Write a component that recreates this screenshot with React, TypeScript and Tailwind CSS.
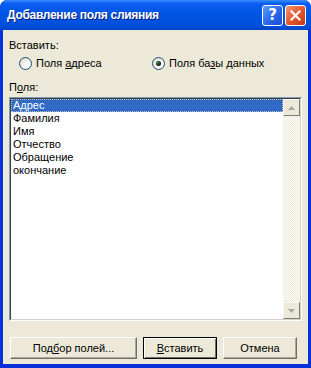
import React from "react";

const font = "font-['Liberation_Sans','DejaVu_Sans',sans-serif]";

const Radio = ({ checked }: { checked?: boolean }) => (
  <span className="w-[13px] h-[13px] rounded-full border border-[#1c5180] bg-[radial-gradient(circle_at_70%_70%,#ffffff_0%,#f2f1ec_40%,#d6d3c6_100%)] flex items-center justify-center shrink-0">
    {checked && (
      <span className="w-[5px] h-[5px] rounded-full bg-[radial-gradient(circle_at_35%_35%,#3c8a3c_0%,#1a1a1a_60%)]" />
    )}
  </span>
);

const ArrowBtn = ({ up }: { up?: boolean }) => (
  <div className="w-[17px] h-[17px] bg-[#ece9d8] border-t border-l border-t-[#f8f7f2] border-l-[#f8f7f2] border-b border-r border-b-[#7f7c70] border-r-[#7f7c70] flex items-center justify-center">
    <svg width="7" height="4" viewBox="0 0 7 4">
      {up ? (
        <path d="M3.5 0 L7 4 L0 4 Z" fill="#aca899" />
      ) : (
        <path d="M0 0 L7 0 L3.5 4 Z" fill="#aca899" />
      )}
    </svg>
  </div>
);

const fields = ["Адрес", "Фамилия", "Имя", "Отчество", "Обращение", "окончание"];

export default function App() {
  return (
    <div className={`w-[311px] h-[368px] ${font} text-[11px] text-black bg-[#0831d9] rounded-t-[7px] flex flex-col overflow-hidden`}>
      {/* title bar */}
      <div className="h-[30px] shrink-0 rounded-t-[7px] bg-[linear-gradient(to_bottom,#3a8cff_0%,#0a5ef0_12%,#0054e3_50%,#0050dc_85%,#0043c8_100%)] flex items-center pl-[7px] pr-[5px]">
        <span className="text-white font-bold text-[12px] tracking-[-0.3px] [text-shadow:1px_1px_0_#0a1f7a] flex-1">
          Добавление поля слияния
        </span>
        <div className="flex gap-[2px]">
          <div className="w-[21px] h-[21px] rounded-[3px] border border-white bg-[linear-gradient(to_bottom_right,#5d9bff,#2563e8_60%,#1b50d0)] flex items-center justify-center text-white font-bold text-[15px] font-['DejaVu_Sans',sans-serif] leading-none">
            ?
          </div>
          <div className="w-[21px] h-[21px] rounded-[3px] border border-white bg-[linear-gradient(to_bottom_right,#f09a7a,#e3572e_50%,#c23a14)] flex items-center justify-center">
            <svg width="11" height="11" viewBox="0 0 11 11">
              <path d="M1.5 1.5 L9.5 9.5 M9.5 1.5 L1.5 9.5" stroke="#fff" strokeWidth="2.2" strokeLinecap="square" />
            </svg>
          </div>
        </div>
      </div>

      {/* body */}
      <div className="flex-1 mx-[3px] mb-[4px] bg-[#ece9d8] flex flex-col px-[6px] pt-[9px]">
        <div className="leading-[13px]">Вставить:</div>
        <div className="flex items-center mt-[4px] pl-[10px] h-[14px]">
          <div className="flex items-center gap-[4px] w-[133px]">
            <Radio />
            <span>
              Поля <span className="underline">а</span>дреса
            </span>
          </div>
          <div className="flex items-center gap-[4px]">
            <Radio checked />
            <span>
              Поля ба<span className="underline">з</span>ы данных
            </span>
          </div>
        </div>
        <div className="mt-[11px] leading-[13px]">
          П<span className="underline">о</span>ля:
        </div>

        {/* list */}
        <div className="mt-[3px] h-[224px] border border-t-[#7f9db9] border-l-[#7f9db9] border-b-white border-r-white">
          <div className="h-full border border-t-[#404040] border-l-[#404040] border-b-[#d4d0c8] border-r-[#d4d0c8] bg-white flex">
            <div className="flex-1">
              {fields.map((f, i) => (
                <div
                  key={f}
                  className={`h-[13px] leading-[13px] pl-[2px] ${
                    i === 0
                      ? "bg-[#316ac5] text-white outline-1 outline-dotted outline-[#c0c0c0] -outline-offset-1"
                      : ""
                  }`}
                >
                  {f}
                </div>
              ))}
            </div>
            <div className="w-[17px] flex flex-col bg-[repeating-conic-gradient(#ffffff_0_25%,#ece9d8_0_50%)] bg-[length:2px_2px]">
              <ArrowBtn up />
              <div className="flex-1" />
              <ArrowBtn />
            </div>
          </div>
        </div>

        {/* buttons */}
        <div className="mt-[16px] flex gap-[6px] pl-[1px]">
          <button className="w-[127px] h-[22px] bg-[#ece9d8] border border-t-white border-l-white border-b-[#716f64] border-r-[#716f64] shadow-[inset_-1px_-1px_0_#aca899]">
            Под<span className="underline">б</span>ор полей...
          </button>
          <button className="w-[74px] h-[22px] bg-[#ece9d8] border border-black shadow-[inset_1px_1px_0_#fff,inset_-1px_-1px_0_#716f64]">
            <span className="underline">В</span>ставить
          </button>
          <button className="w-[74px] h-[22px] bg-[#ece9d8] border border-t-white border-l-white border-b-[#716f64] border-r-[#716f64] shadow-[inset_-1px_-1px_0_#aca899]">
            Отмена
          </button>
        </div>
      </div>
    </div>
  );
}
